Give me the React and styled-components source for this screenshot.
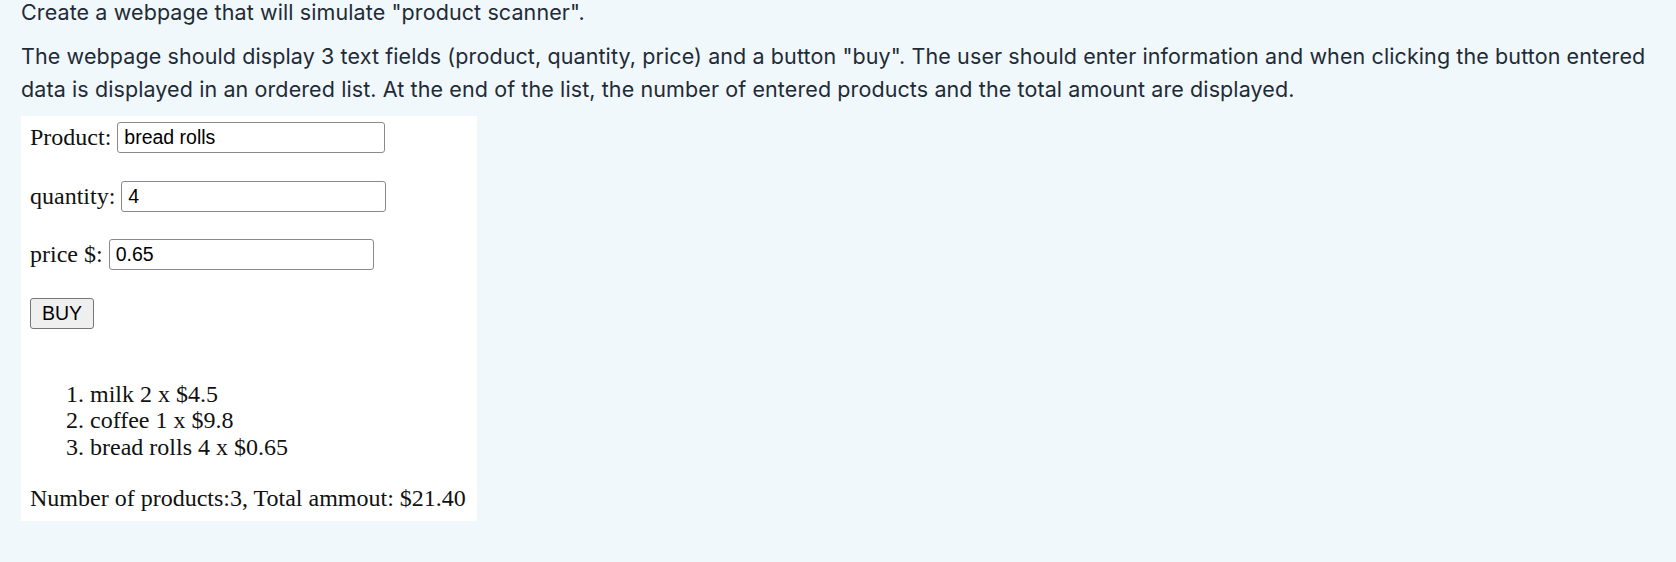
import React from "react";
import styled, { createGlobalStyle } from "styled-components";

const GlobalStyle = createGlobalStyle`
  html, body {
    margin: 0;
    padding: 0;
    background: #f0f8fb;
  }
`;

const Page = styled.div`
  padding: 0 21px;
  font-family: Inter, "Noto Sans", sans-serif;
  font-size: 21.5px;
  letter-spacing: 0.1px;
  line-height: 33px;
  color: #1f2b36;
`;

const Para = styled.p`
  margin: ${(p) => p.top || 0}px 0 ${(p) => p.gap || 0}px;
`;

const Shot = styled.div`
  width: 456px;
  height: 405px;
  box-sizing: border-box;
  margin-top: 10px;
  background: #fff;
  padding: 6px 9px;
  font-family: "Liberation Serif", "Times New Roman", serif;
  font-size: 24px;
  letter-spacing: 0;
  line-height: 26.5px;
  color: #111;
`;

const Row = styled.div`
  display: flex;
  align-items: center;
  gap: 6px;
  height: 31px;
  margin-bottom: 27.5px;
`;

const Field = styled.input`
  width: ${(p) => p.w}px;
  height: 31px;
  box-sizing: border-box;
  border: 1.5px solid #8a8a8a;
  border-radius: 3px;
  padding: 0 6px;
  font-family: "Liberation Sans", Arial, sans-serif;
  font-size: 19.5px;
  color: #000;
  background: #fff;
  outline: none;
`;

const Buy = styled.button`
  display: block;
  width: 64px;
  height: 31px;
  border: 1.5px solid #767676;
  border-radius: 3px;
  background: #efefef;
  font-family: "Liberation Sans", Arial, sans-serif;
  font-size: 19.5px;
  color: #000;
  padding: 0;
`;

const List = styled.ol`
  margin: 52px 0 24.5px;
  padding-left: 60px;
`;

const Summary = styled.div``;

const items = [
  ["milk", 2, "4.5"],
  ["coffee", 1, "9.8"],
  ["bread rolls", 4, "0.65"],
];

export default function App() {
  return (
    <Page>
      <GlobalStyle />
      <Para top={-4} gap={11}>Create a webpage that will simulate "product scanner".</Para>
      <Para>
        The webpage should display 3 text fields (product, quantity, price) and a button "buy". The user should enter
        information and when clicking the button entered data is displayed in an ordered list. At the end of the list,
        the number of entered products and the total amount are displayed.
      </Para>
      <Shot>
        <Row>
          <span>Product:</span>
          <Field w={268} defaultValue="bread rolls" />
        </Row>
        <Row>
          <span>quantity:</span>
          <Field w={265} defaultValue="4" />
        </Row>
        <Row>
          <span>price $:</span>
          <Field w={265} defaultValue="0.65" />
        </Row>
        <Buy>BUY</Buy>
        <List>
          {items.map(([name, qty, price]) => (
            <li key={name}>
              {name} {qty} x ${price}
            </li>
          ))}
        </List>
        <Summary>Number of products:3, Total ammout: $21.40</Summary>
      </Shot>
    </Page>
  );
}
